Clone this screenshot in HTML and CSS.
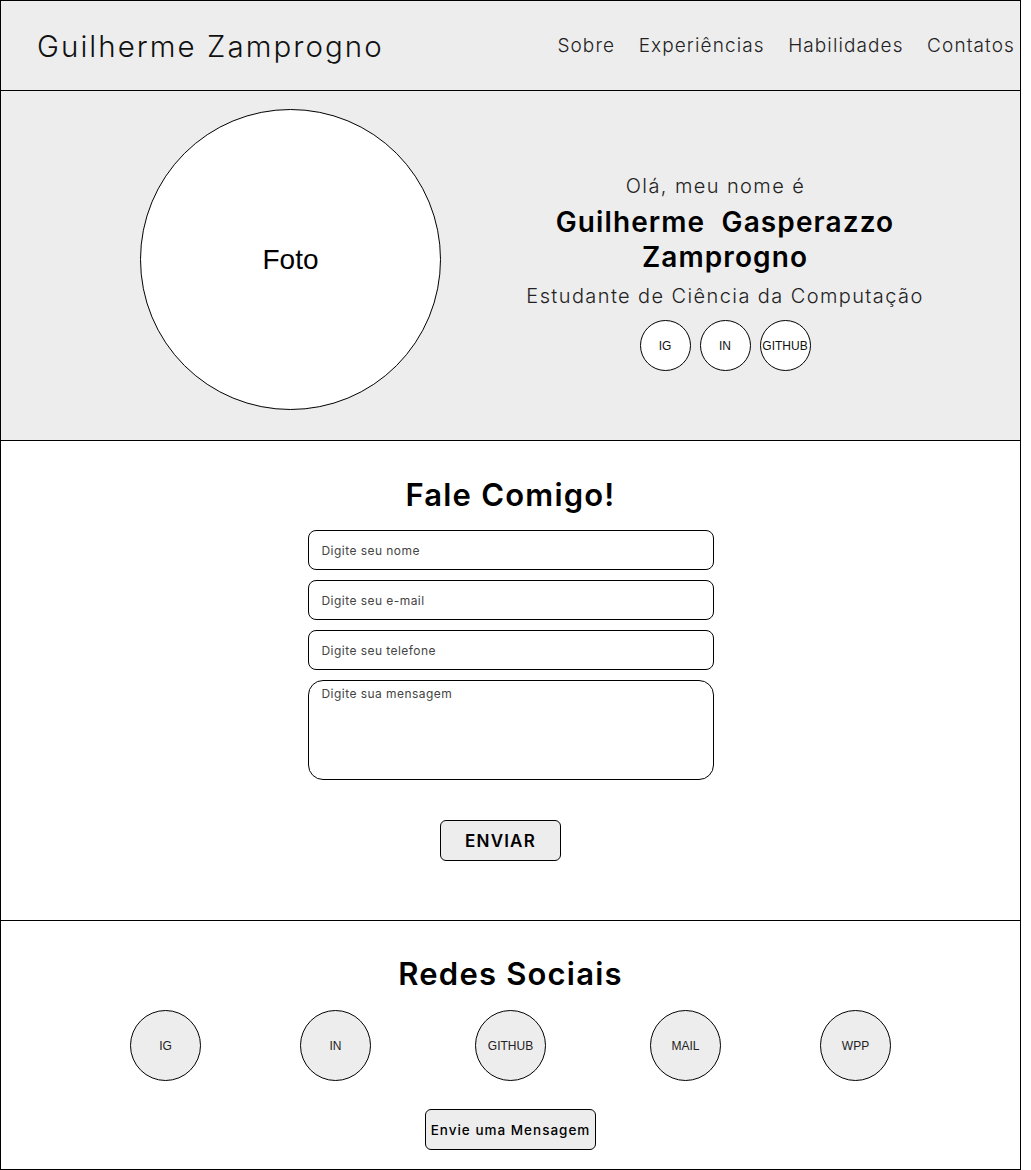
FILE: index.html
```html
<!DOCTYPE html>
<html lang="pt-BR">
<head>
<meta charset="utf-8">
<title>Guilherme Zamprogno</title>
<link rel="stylesheet" href="styles.css">
</head>
<body>
<div class="frame">
  <header class="topbar">
    <div class="brand">Guilherme Zamprogno</div>
    <nav class="nav">
      <a>Sobre</a>
      <a>Experiências</a>
      <a>Habilidades</a>
      <a>Contatos</a>
    </nav>
  </header>

  <section class="hero">
    <div class="photo">Foto</div>
    <div class="intro">
      <div class="hello">Olá, meu nome é</div>
      <h1 class="fullname">Guilherme&nbsp; Gasperazzo<br>Zamprogno</h1>
      <div class="role">Estudante de Ciência da Computação</div>
      <div class="mini-links">
        <span class="mini">IG</span>
        <span class="mini">IN</span>
        <span class="mini">GITHUB</span>
      </div>
    </div>
  </section>

  <section class="contact">
    <h2 class="section-title">Fale Comigo!</h2>
    <form class="form">
      <div class="field">Digite seu nome</div>
      <div class="field">Digite seu e-mail</div>
      <div class="field">Digite seu telefone</div>
      <div class="field area">Digite sua mensagem</div>
      <div class="btn send">ENVIAR</div>
    </form>
  </section>

  <section class="social">
    <h2 class="section-title social-title">Redes Sociais</h2>
    <div class="social-row">
      <span class="big">IG</span>
      <span class="big">IN</span>
      <span class="big">GITHUB</span>
      <span class="big">MAIL</span>
      <span class="big">WPP</span>
    </div>
    <div class="btn msg">Envie uma Mensagem</div>
  </section>
</div>
</body>
</html>
```

FILE: styles.css
```css
* { box-sizing: border-box; }
body {
  margin: 0;
  background: #fff;
  font-family: "Inter", "Open Sans", sans-serif;
  color: #111;
}
.frame {
  width: 1021px;
  border: 1px solid #000;
}
.topbar {
  height: 90px;
  background: #ededed;
  border-bottom: 1px solid #000;
  display: flex;
  align-items: center;
  justify-content: space-between;
  padding: 0 5px 0 36px;
}
.brand {
  font-size: 29.5px;
  font-weight: 300;
  letter-spacing: 2.05px;
  color: #111;
}
.nav {
  display: flex;
  gap: 23.5px;
}
.nav a {
  font-size: 19px;
  font-weight: 300;
  color: #222;
  letter-spacing: 1.1px;
}
.hero {
  height: 350px;
  background: #ededed;
  border-bottom: 1px solid #000;
  display: flex;
  align-items: flex-start;
  padding: 18px 0 0 139px;
  gap: 64px;
}
.photo {
  flex: none;
  width: 301px;
  height: 301px;
  border-radius: 50%;
  border: 1px solid #000;
  background: #fff;
  display: flex;
  align-items: center;
  justify-content: center;
  font-family: "Liberation Sans", Arial, sans-serif;
  font-size: 28px;
  color: #000;
}
.intro {
  width: 440px;
  margin-top: 65px;
  display: flex;
  flex-direction: column;
  align-items: center;
  text-align: center;
}
.hello {
  font-size: 20px;
  line-height: 24px;
  font-weight: 300;
  color: #222;
  letter-spacing: 1.4px;
  padding-right: 19px;
}
.fullname {
  margin: 7px 0 0;
  font-size: 28px;
  line-height: 35px;
  font-weight: 600;
  color: #000;
  letter-spacing: 1.1px;
}
.role {
  margin-top: 9px;
  font-size: 20px;
  line-height: 24px;
  font-weight: 300;
  color: #222;
  letter-spacing: 1.4px;
}
.mini-links {
  display: flex;
  gap: 9px;
  margin-top: 12px;
}
.mini {
  width: 51px;
  height: 51px;
  border-radius: 50%;
  border: 1px solid #000;
  background: #fff;
  display: flex;
  align-items: center;
  justify-content: center;
  font-family: "Liberation Sans", Arial, sans-serif;
  font-size: 12px;
  color: #111;
}
.contact {
  height: 480px;
  border-bottom: 1px solid #000;
  display: flex;
  flex-direction: column;
  align-items: center;
  padding-top: 34px;
}
.section-title {
  margin: 0;
  font-size: 31px;
  font-weight: 600;
  color: #000;
  line-height: 40px;
  letter-spacing: 1.2px;
}
.form {
  margin-top: 15px;
  display: flex;
  flex-direction: column;
  align-items: center;
  gap: 10px;
}
.field {
  width: 406px;
  height: 40px;
  border: 1px solid #000;
  border-radius: 8px;
  padding: 0 13px;
  display: flex;
  align-items: center;
  font-size: 12px;
  font-weight: 400;
  color: #444;
  letter-spacing: 0.45px;
  background: #fff;
}
.field.area {
  height: 100px;
  align-items: flex-start;
  padding-top: 5px;
  border-radius: 15px;
}
.btn {
  border: 1px solid #000;
  border-radius: 6px;
  background: #ededed;
  display: flex;
  align-items: center;
  justify-content: center;
  color: #000;
}
.send {
  margin: 30px 20px 0 0;
  width: 121px;
  height: 41px;
  font-size: 17px;
  font-weight: 600;
  letter-spacing: 1.2px;
}
.social {
  height: 248px;
  display: flex;
  flex-direction: column;
  align-items: center;
  padding-top: 33px;
}
.social-row {
  display: flex;
  gap: 99px;
  margin-top: 16px;
}
.big {
  width: 71px;
  height: 71px;
  border-radius: 50%;
  border: 1px solid #000;
  background: #ededed;
  display: flex;
  align-items: center;
  justify-content: center;
  font-family: "Liberation Sans", Arial, sans-serif;
  font-size: 12px;
  color: #222;
}
.big:nth-child(3) {
  margin: 0 5px;
}
.msg {
  margin-top: 28px;
  width: 171px;
  height: 41px;
  font-size: 13.5px;
  font-weight: 500;
  letter-spacing: 1px;
}
```
